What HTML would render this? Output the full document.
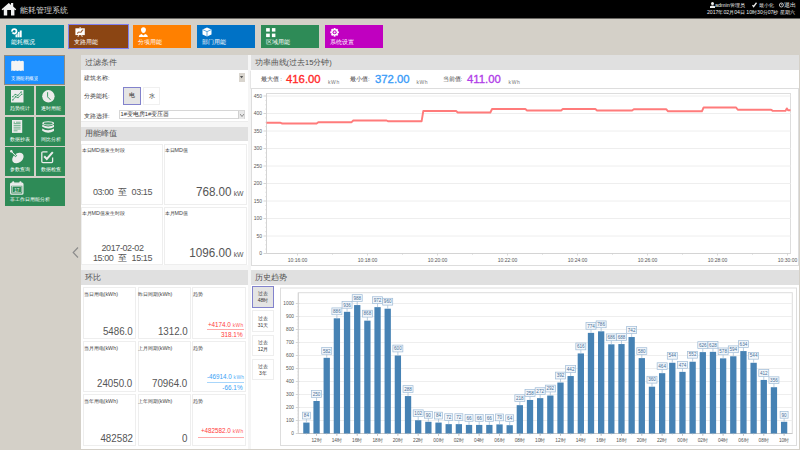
<!DOCTYPE html>
<html><head><meta charset="utf-8">
<style>
*{margin:0;padding:0;box-sizing:border-box}
html,body{width:800px;height:450px;overflow:hidden;background:#d4d0c8;font-family:"Liberation Sans", sans-serif;}
.a{position:absolute}
.hdr{left:0;top:0;width:800px;height:18px;background:#000;box-shadow:0 1px 0 #6a6864}
.tile{position:absolute;top:25px;width:58px;height:23px;color:#fff}
.tile .t{position:absolute;left:5px;top:13.5px;font-size:6px;line-height:7px;white-space:nowrap}
.tile svg{position:absolute;left:5px;top:3px}
.panel{position:absolute;background:#fff}
.ph{position:absolute;background:#e0e0e0;color:#505050;font-size:7.7px;line-height:15px;padding-left:4px;white-space:nowrap}
.card{position:absolute;background:#fff;border:1px solid #eee}
.lbl{position:absolute;font-size:5.5px;line-height:6.5px;color:#444;white-space:nowrap}
.num{position:absolute;color:#555;white-space:nowrap;text-align:right}
.side{position:absolute;background:#2e8b57;color:#fff}
.side .t{position:absolute;left:5.3px;font-size:4.8px;line-height:6px;top:19.8px;white-space:nowrap}
</style></head><body>
<div class="a hdr"></div>
<!-- house icon -->
<svg class="a" style="left:1px;top:2px" width="16" height="15" viewBox="0 0 16 15">
<path d="M7.8 1 L0.6 7.3 L1.4 8.2 L2.8 7.4 L2.8 13.6 L6.2 13.6 L6.2 7.9 L10 7.9 L10 13.6 L13.4 13.6 L13.4 7.4 L14.5 8.2 L15.2 7.3 L12.2 4.6 L12.2 1 L10 1 L10 2.9 Z" fill="#f0f0f0"/>
</svg>
<div class="a" style="left:20px;top:4.6px;font-size:8.3px;line-height:11px;color:#ddd;white-space:nowrap">能耗管理系统</div>
<svg class="a" style="left:710px;top:2px" width="5" height="6" viewBox="0 0 5 6"><circle cx="2.5" cy="1.6" r="1.5" fill="#eee"/><path d="M0 6 L0 4.2 Q2.5 2.6 5 4.2 L5 6 Z" fill="#eee"/></svg>
<div class="a" style="left:715px;top:1.5px;font-size:5.4px;line-height:7px;color:#eee;white-space:nowrap">admin管理员</div>
<svg class="a" style="left:752px;top:2px" width="5" height="6" viewBox="0 0 5 6"><path d="M0 3.5 L1.6 5.8 L5 1.2 L4 0.2 L1.6 3.6 L1 2.8 Z" fill="#eee"/></svg>
<div class="a" style="left:758.5px;top:1.5px;font-size:5.4px;line-height:7px;color:#eee;white-space:nowrap">最小化</div>
<svg class="a" style="left:778.5px;top:2px" width="5" height="6" viewBox="0 0 5 6"><circle cx="2.4" cy="3" r="2" fill="none" stroke="#eee" stroke-width="0.8"/><path d="M2.4 1.8 V3 H3.4" stroke="#eee" stroke-width="0.6" fill="none"/></svg>
<div class="a" style="left:783.5px;top:1.5px;font-size:5.8px;line-height:7px;color:#eee;white-space:nowrap">退出</div>
<div class="a" style="left:707px;top:9px;font-size:5.15px;line-height:7px;color:#eee;white-space:nowrap">2017年02月04日 10时30分07秒 星期六</div>

<!-- top tiles -->
<div class="tile" style="left:6px;background:#00879b"><svg style="left:4.5px;top:2.5px" width="12" height="10" viewBox="0 0 12 10"><rect x="4.5" y="5.4" width="2.1" height="3.9" fill="#f4fafa"/><rect x="6.8" y="3.9" width="1.8" height="5.4" fill="#f4fafa"/><rect x="8.8" y="2.5" width="1.9" height="6.8" fill="#fff"/><circle cx="3.3" cy="3.3" r="2.2" fill="none" stroke="#00879b" stroke-width="3"/><circle cx="3.3" cy="3.3" r="2.2" fill="none" stroke="#fff" stroke-width="1.75" stroke-dasharray="5 0.9 7.0 0.9"/></svg><div class="t">能耗概况</div></div>
<div class="tile" style="left:68px;top:23.5px;width:61px;height:25.5px;border:1.5px solid #8080f0;background:#8b4513"><svg style="left:5.8px;top:2.5px" width="11" height="11" viewBox="0 0 11 11"><rect x="0.4" y="1.3" width="9.4" height="6.8" fill="#fff"/><path d="M2.4 6.6 Q3 4.6 4.8 5.2 Q6.4 5.6 6.8 4 Q7.3 2.9 8.3 3.1" stroke="#a0643a" stroke-width="1.1" fill="none"/><path d="M5.1 0 L5.1 1.5" stroke="#fff" stroke-width="1"/><path d="M3.6 8 L2.9 10 M6.6 8 L7.3 10" stroke="#f4e8e0" stroke-width="0.9"/></svg><div class="t" style="top:14.6px;left:5.3px">支路用能</div></div>
<div class="tile" style="left:133px;background:#ff8000"><svg style="left:5px;top:2px" width="11" height="11" viewBox="0 0 11 11"><path d="M5.45 0.3 Q8 0.3 7.9 2.8 Q7.7 5.9 5.45 5.9 Q3.2 5.9 3 2.8 Q2.9 0.3 5.45 0.3 Z" fill="#fff"/><path d="M0.7 10 Q0.9 7.6 3.6 7 L5.3 8.6 L7.2 7 Q9.8 7.6 9.9 10 Z" fill="#fff"/></svg><div class="t">分项用能</div></div>
<div class="tile" style="left:197px;background:#0072c6"><svg style="left:5px;top:2.2px" width="10" height="10" viewBox="0 0 10 10"><path d="M5 0.5 L9.5 2.5 L9.5 7.5 L5 9.5 L0.5 7.5 L0.5 2.5 Z" fill="#fff"/><path d="M0.8 2.7 L5 4.6 L9.2 2.7 M5 4.6 L5 9.3" stroke="#0072c6" stroke-width="0.6" fill="none"/></svg><div class="t">部门用能</div></div>
<div class="tile" style="left:261px;background:#2e8b57"><svg style="left:5px;top:2.5px" width="10" height="10" viewBox="0 0 10 10"><rect x="0.1" y="0.1" width="3.7" height="3.5" fill="#fff"/><rect x="5.9" y="0.1" width="3.5" height="3.5" fill="#fff"/><rect x="0.1" y="5.6" width="3.7" height="3.5" fill="#fff"/><rect x="5.9" y="5.6" width="3.5" height="3.5" fill="#fff"/></svg><div class="t">区域用能</div></div>
<div class="tile" style="left:325px;background:#c000c0"><svg style="left:5px;top:2.7px" width="10" height="10" viewBox="0 0 10 10"><g fill="#fff"><circle cx="4.6" cy="4.3" r="3.3"/><rect x="3.7" y="0" width="1.8" height="8.6"/><rect x="0.3" y="3.4" width="8.6" height="1.8"/><rect x="3.7" y="0" width="1.8" height="8.6" transform="rotate(45 4.6 4.3)"/><rect x="3.7" y="0" width="1.8" height="8.6" transform="rotate(-45 4.6 4.3)"/></g><circle cx="4.6" cy="4.3" r="2" fill="#c000c0"/><circle cx="4.6" cy="4.3" r="1.1" fill="#f6e0f6"/></svg><div class="t">系统设置</div></div>

<!-- sidebar -->
<div class="a" style="left:4px;top:55px;width:61px;height:29.5px;background:#1e90ff;border:1px solid #8d8b82"><svg class="a" style="left:6px;top:4px" width="13" height="11.5" viewBox="0 0 13 11.5"><path d="M0.2 1.6 Q1.5 0.2 3.2 1.2 Q4.8 0 6.5 1.2 Q8.2 0 9.8 1.2 Q11.5 0.2 12.8 1.6 L12.8 11 Q11.5 9.8 9.8 11 Q8.2 9.8 6.5 11 Q4.8 9.8 3.2 11 Q1.5 9.8 0.2 11 Z" fill="#f4f4f4"/></svg><div class="a" style="left:5.8px;top:18.8px;font-size:5px;line-height:6px;color:#fff;white-space:nowrap;transform:scaleX(0.9);transform-origin:0 50%">支路能耗概览</div></div>
<div class="side" style="left:5px;top:86px;width:28.5px;height:28.5px"><svg class="a" style="left:6px;top:4px" width="12.5" height="12.5" viewBox="0 0 12.5 12.5"><rect x="0" y="0" width="12.5" height="12.5" fill="#ececec"/><path d="M1.8 10 L4.6 6.8 L7 7.6 L10.8 4.2 M1.8 6.8 L4.2 4.4 L6.8 5.4 L10.2 2" stroke="#3d9a66" stroke-width="0.8" fill="none"/><g fill="#3d9a66"><circle cx="1.8" cy="10" r="0.7"/><circle cx="4.6" cy="6.8" r="0.7"/><circle cx="7" cy="7.6" r="0.7"/><circle cx="10.8" cy="4.2" r="0.7"/><circle cx="1.8" cy="6.8" r="0.7"/><circle cx="4.2" cy="4.4" r="0.7"/><circle cx="6.8" cy="5.4" r="0.7"/><circle cx="10.2" cy="2" r="0.7"/></g></svg><div class="t">趋势统计</div></div>
<div class="side" style="left:36px;top:86px;width:28.5px;height:28.5px"><svg class="a" style="left:5.6px;top:4px" width="13" height="13" viewBox="0 0 13 13"><circle cx="6.4" cy="6.3" r="6.2" fill="#ececec"/><path d="M5.6 2.2 L5.6 6.8 Q6.4 8.4 8.6 9.6" stroke="#3d9a66" stroke-width="1" fill="none"/></svg><div class="t">逐时用能</div></div>
<div class="side" style="left:5px;top:117px;width:28.5px;height:28.5px"><svg class="a" style="left:7.3px;top:3.2px" width="10.5" height="13" viewBox="0 0 10.5 13"><rect x="0" y="0" width="10.2" height="12.9" fill="#ececec"/><path d="M1.6 2.2 H3 M4 2.2 H8.6 M1.6 3.6 H8.6 M1.6 5.4 H8.6 M1.6 7.2 H8.6 M1.6 9.0 H8.6 M1.6 10.8 H5.5" stroke="#3d9a66" stroke-width="0.7"/></svg><div class="t">数据抄表</div></div>
<div class="side" style="left:36px;top:117px;width:28.5px;height:28.5px"><svg class="a" style="left:5.6px;top:3.6px" width="12.5" height="13" viewBox="0 0 12.5 13"><ellipse cx="6.2" cy="2.3" rx="6" ry="2.1" fill="#ececec"/><ellipse cx="6.2" cy="2.4" rx="4.4" ry="1.1" fill="#3d9a66"/><path d="M0.2 3.6 Q6.2 7.4 12.2 3.6 L12.2 5.8 Q6.2 9.4 0.2 5.8 Z" fill="#ececec"/><path d="M0.2 7.4 Q6.2 11.2 12.2 7.4 L12.2 9.8 Q6.2 13.6 0.2 9.8 Z" fill="#ececec"/></svg><div class="t">同比分析</div></div>
<div class="side" style="left:5px;top:147px;width:28.5px;height:28.5px"><svg class="a" style="left:5.3px;top:3.3px" width="14" height="14" viewBox="0 0 14 14"><ellipse cx="7.9" cy="8" rx="6.3" ry="4.6" fill="#ececec" transform="rotate(-40 7.9 8)"/><path d="M1.2 1.2 L6.4 6.6" stroke="#3d9a66" stroke-width="2.2"/><path d="M1.2 1.2 L6.4 6.6" stroke="#ececec" stroke-width="1.0"/><circle cx="1.3" cy="1.3" r="1.2" fill="#ececec"/></svg><div class="t">参数查询</div></div>
<div class="side" style="left:36px;top:147px;width:28.5px;height:28.5px"><svg class="a" style="left:5.3px;top:4px" width="13" height="13" viewBox="0 0 13 13"><path d="M6.5 0.8 H2 Q0.8 0.8 0.8 2 V10.6 Q0.8 11.7 2 11.7 H10.4 Q11.6 11.7 11.6 10.6 V6.5" stroke="#ececec" stroke-width="1.3" fill="none"/><path d="M3.2 5.2 L5.8 8 L11.8 1.2" stroke="#ececec" stroke-width="2" fill="none"/></svg><div class="t">数据检查</div></div>
<div class="side" style="left:5px;top:178px;width:59.5px;height:28px"><svg class="a" style="left:5.4px;top:2.6px" width="14" height="14" viewBox="0 0 14 14"><rect x="0.7" y="2.2" width="12.2" height="11" rx="1" fill="none" stroke="#ececec" stroke-width="1.3"/><rect x="0.7" y="2.2" width="12.2" height="2.6" fill="#ececec"/><circle cx="3.2" cy="1.4" r="1.1" fill="#ececec"/><circle cx="10.4" cy="1.4" r="1.1" fill="#ececec"/><rect x="2.4" y="5.6" width="8.8" height="5.8" fill="none" stroke="#ececec" stroke-width="0.5"/><text x="6.8" y="10.6" font-size="4.6" fill="#ececec" text-anchor="middle" font-family="Liberation Sans">17</text></svg><div class="t" style="top:19px">非工作日用能分析</div></div>
<svg class="a" style="left:72px;top:247px" width="7" height="11" viewBox="0 0 7 11"><path d="M6 0.5 L1.2 5.5 L6 10.5" stroke="#8c8c8c" stroke-width="1.2" fill="none"/></svg>

<!-- left column -->
<div class="panel" style="left:81px;top:55px;width:718px;height:394px"></div>
<div class="a" style="left:248px;top:55px;width:2.5px;height:394px;background:#f5f5f5"></div>
<div class="ph" style="left:81px;top:55px;width:167px;height:15px">过滤条件</div>
<div class="lbl" style="left:84px;top:75px">建筑名称:</div>
<div class="a" style="left:238.8px;top:73.2px;width:6.3px;height:8.4px;background:#d9d5ce"><svg class="a" style="left:1.6px;top:3.2px" width="3.2" height="2.2" viewBox="0 0 3.2 2.2"><path d="M0 0.2 Q1.6 -0.3 3.2 0.2 L1.6 2.2 Z" fill="#555"/></svg></div>
<div class="lbl" style="left:84px;top:93px">分类能耗:</div>
<div class="a" style="left:122.5px;top:86.5px;width:18px;height:18px;background:#e4e4e4;border:1.5px solid #8282cc;font-size:5.5px;line-height:14px;text-align:center;color:#333">电</div>
<div class="a" style="left:143px;top:86.5px;width:17px;height:18px;background:#fff;border:1px solid #f0f0f0;font-size:5.5px;line-height:16px;text-align:center;color:#333">水</div>
<div class="lbl" style="left:84px;top:112.5px">支路选择:</div>
<div class="a" style="left:119px;top:109.6px;width:126px;height:9.5px;background:#fff;border:1px solid #d6d6d6;font-size:5.7px;line-height:7.5px;padding-left:0.5px;color:#333;white-space:nowrap">1#变电房1#变压器</div>
<div class="a" style="left:237.5px;top:111px;width:6.5px;height:7.5px;background:#e8e8e8;border-left:1px solid #d0d0d0"><svg class="a" style="left:1.5px;top:2.5px" width="4" height="3" viewBox="0 0 4 3"><path d="M0 0 L2 2.5 L4 0" stroke="#666" stroke-width="0.7" fill="none"/></svg></div>
<div class="a" style="left:81px;top:121.3px;width:167px;height:5.3px;background:#f6f6f6;border-top:1px solid #ececec"></div>

<div class="ph" style="left:81px;top:126.6px;width:167px;height:14.8px;line-height:14.8px">用能峰值</div>
<div class="card" style="left:81px;top:143.5px;width:82px;height:61px"><div class="lbl" style="left:-0.4px;top:2.2px;font-size:5.4px">本日MD值发生时段</div><div class="num" style="left:0;width:81px;text-align:center;top:42.6px;font-size:9px;line-height:10.5px;letter-spacing:-0.4px">03:00<span style="margin:0 4.5px 0 5px">至</span>03:15</div></div>
<div class="card" style="left:164px;top:143.5px;width:82.5px;height:61px"><div class="lbl" style="left:-0.4px;top:2.2px;font-size:5.4px">本日MD值</div><div class="num" style="right:2px;top:40.3px;font-size:12.3px;line-height:14px"><span style="display:inline-block;transform:scaleX(0.95);transform-origin:100% 50%">768.00</span><span style="font-size:6.8px"> kW</span></div></div>
<div class="card" style="left:81px;top:206.5px;width:82px;height:58px"><div class="lbl" style="left:-0.4px;top:2.2px;font-size:5.4px">本月MD值发生时段</div><div class="num" style="left:0;width:81px;text-align:center;top:35px;font-size:9px;line-height:10.5px;letter-spacing:-0.4px">2017-02-02<br>15:00<span style="margin:0 4.5px 0 5px">至</span>15:15</div></div>
<div class="card" style="left:164px;top:206.5px;width:82.5px;height:58px"><div class="lbl" style="left:-0.4px;top:2.2px;font-size:5.4px">本月MD值</div><div class="num" style="right:2px;top:38.6px;font-size:12.3px;line-height:14px"><span style="display:inline-block;transform:scaleX(0.95);transform-origin:100% 50%">1096.00</span><span style="font-size:6.8px"> kW</span></div></div>
<div class="a" style="left:81px;top:265.2px;width:167px;height:4.5px;background:#f7f7f7"></div>
<div class="ph" style="left:81px;top:269.7px;width:167px;height:15.3px;line-height:15.3px">环比</div>
<div class="card" style="left:83.4px;top:287.2px;width:52.6px;height:52px"><div class="lbl" style="left:-0.8px;top:2.7px;font-size:5.4px">当日用电(kWh)</div><div class="num" style="right:2.3px;top:35.40px;font-size:11.7px;line-height:14px;transform:scaleX(0.835);transform-origin:100% 50%">5486.0</div></div>
<div class="card" style="left:137.8px;top:287.2px;width:52.8px;height:52px"><div class="lbl" style="left:-0.8px;top:2.7px;font-size:5.4px">昨日同期(kWh)</div><div class="num" style="right:2.3px;top:35.40px;font-size:11.7px;line-height:14px;transform:scaleX(0.835);transform-origin:100% 50%">1312.0</div></div>
<div class="card" style="left:192.4px;top:287.2px;width:53.2px;height:52px"><div class="lbl" style="left:-0.8px;top:2.7px;font-size:5.4px">趋势</div><div class="num" style="right:1px;top:32.60px;width:36.7px;font-size:6.3px;line-height:7.5px;color:#ff3b3b;border-bottom:1px solid #ff3b3b70">+4174.0<span style="font-size:4.8px;letter-spacing:0.45px;opacity:0.85"> kWh</span></div><div class="num" style="right:2px;top:43.10px;font-size:6.4px;line-height:8px;color:#ff3b3b">318.1%</div></div>
<div class="card" style="left:83.4px;top:341.4px;width:52.6px;height:50.5px"><div class="lbl" style="left:-0.8px;top:2.7px;font-size:5.4px">当月用电(kWh)</div><div class="num" style="right:2.3px;top:33.90px;font-size:11.7px;line-height:14px;transform:scaleX(0.835);transform-origin:100% 50%">24050.0</div></div>
<div class="card" style="left:137.8px;top:341.4px;width:52.8px;height:50.5px"><div class="lbl" style="left:-0.8px;top:2.7px;font-size:5.4px">上月同期(kWh)</div><div class="num" style="right:2.3px;top:33.90px;font-size:11.7px;line-height:14px;transform:scaleX(0.835);transform-origin:100% 50%">70964.0</div></div>
<div class="card" style="left:192.4px;top:341.4px;width:53.2px;height:50.5px"><div class="lbl" style="left:-0.8px;top:2.7px;font-size:5.4px">趋势</div><div class="num" style="right:1px;top:31.10px;width:36.7px;font-size:6.3px;line-height:7.5px;color:#38a2f5;border-bottom:1px solid #38a2f570">-46914.0<span style="font-size:4.8px;letter-spacing:0.45px;opacity:0.85"> kWh</span></div><div class="num" style="right:2px;top:41.60px;font-size:6.4px;line-height:8px;color:#38a2f5">-66.1%</div></div>
<div class="card" style="left:83.4px;top:394.3px;width:52.6px;height:52px"><div class="lbl" style="left:-0.8px;top:2.7px;font-size:5.4px">当年用电(kWh)</div><div class="num" style="right:2.3px;top:35.40px;font-size:11.7px;line-height:14px;transform:scaleX(0.835);transform-origin:100% 50%">482582</div></div>
<div class="card" style="left:137.8px;top:394.3px;width:52.8px;height:52px"><div class="lbl" style="left:-0.8px;top:2.7px;font-size:5.4px">上年同期(kWh)</div><div class="num" style="right:2.3px;top:35.40px;font-size:11.7px;line-height:14px;transform:scaleX(0.835);transform-origin:100% 50%">0</div></div>
<div class="card" style="left:192.4px;top:394.3px;width:53.2px;height:52px"><div class="lbl" style="left:-0.8px;top:2.7px;font-size:5.4px">趋势</div><div class="num" style="right:1px;top:31.90px;width:46px;font-size:6.3px;line-height:7.5px;padding-bottom:1.8px;color:#ff3b3b;border-bottom:1px solid #ff3b3b70">+482582.0<span style="font-size:4.8px;letter-spacing:0.45px;opacity:0.85"> kWh</span></div></div>

<!-- right column -->

<div class="ph" style="left:250.5px;top:55px;width:548.5px;height:15px;font-size:7.5px">功率曲线(过去15分钟)</div>
<div class="a" style="left:250px;top:70.5px;width:549px;height:18px;background:#fff;border-left:1px solid #e6e6e6"></div>
<div class="lbl" style="left:260.5px;top:76.3px;font-size:6px;line-height:7px">最大值 :</div>
<div class="num" style="left:286px;top:72.6px;font-size:11.8px;line-height:13px;color:#ff2a2a;transform:scaleX(0.96);transform-origin:0 50%;-webkit-text-stroke:0.35px">416.00</div>
<div class="lbl" style="left:328px;top:78.6px;font-size:5px;line-height:6px;letter-spacing:0.6px;color:#777">kWh</div>
<div class="lbl" style="left:350px;top:76.3px;font-size:6px;line-height:7px">最小值:</div>
<div class="num" style="left:375px;top:72.6px;font-size:11.8px;line-height:13px;color:#3a9cf8;transform:scaleX(0.96);transform-origin:0 50%;-webkit-text-stroke:0.35px">372.00</div>
<div class="lbl" style="left:416.4px;top:78.6px;font-size:5px;line-height:6px;letter-spacing:0.6px;color:#777">kWh</div>
<div class="lbl" style="left:442.5px;top:76.3px;font-size:6px;line-height:7px">当前值:</div>
<div class="num" style="left:467px;top:72.6px;font-size:11.8px;line-height:13px;color:#b13de8;transform:scaleX(0.96);transform-origin:0 50%;-webkit-text-stroke:0.35px">411.00</div>
<div class="lbl" style="left:508.6px;top:78.6px;font-size:5px;line-height:6px;letter-spacing:0.6px;color:#777">kWh</div>

<div class="ph" style="left:250.5px;top:270px;width:548.5px;height:15px;font-size:7.5px">历史趋势</div>
<div class="a" style="left:252px;top:286px;width:22px;height:21.5px;background:#e4e4e4;border:1.5px solid #8282cc;font-size:5px;line-height:7px;text-align:center;color:#333;padding-top:2.8px">过去<br>48时</div>
<div class="a" style="left:252px;top:310px;width:22px;height:21.5px;background:#fff;border:1px solid #eee;font-size:5px;line-height:7px;text-align:center;color:#333;padding-top:3.5px">过去<br>31天</div>
<div class="a" style="left:252px;top:334.5px;width:22px;height:21.5px;background:#fff;border:1px solid #eee;font-size:5px;line-height:7px;text-align:center;color:#333;padding-top:3.5px">过去<br>12月</div>
<div class="a" style="left:252px;top:358.5px;width:22px;height:21.5px;background:#fff;border:1px solid #eee;font-size:5px;line-height:7px;text-align:center;color:#333;padding-top:3.5px">过去<br>3年</div>

<svg class="a" style="left:0;top:0" width="800" height="450" viewBox="0 0 800 450" font-family="Liberation Sans, sans-serif">
<rect x="251.5" y="88.5" width="547" height="177" fill="#fff" stroke="#ddd" stroke-width="1"/>
<rect x="266.5" y="93.5" width="524.0" height="160.0" fill="#fff" stroke="#ddd" stroke-width="1"/>
<line x1="266.5" y1="236.00" x2="790.5" y2="236.00" stroke="#eee" stroke-width="1"/>
<line x1="266.5" y1="218.50" x2="790.5" y2="218.50" stroke="#eee" stroke-width="1"/>
<line x1="266.5" y1="201.00" x2="790.5" y2="201.00" stroke="#eee" stroke-width="1"/>
<line x1="266.5" y1="183.50" x2="790.5" y2="183.50" stroke="#eee" stroke-width="1"/>
<line x1="266.5" y1="166.00" x2="790.5" y2="166.00" stroke="#eee" stroke-width="1"/>
<line x1="266.5" y1="148.50" x2="790.5" y2="148.50" stroke="#eee" stroke-width="1"/>
<line x1="266.5" y1="131.00" x2="790.5" y2="131.00" stroke="#eee" stroke-width="1"/>
<line x1="266.5" y1="113.50" x2="790.5" y2="113.50" stroke="#eee" stroke-width="1"/>
<line x1="266.5" y1="96.00" x2="790.5" y2="96.00" stroke="#eee" stroke-width="1"/>
<text x="262" y="255.30" text-anchor="end" font-size="5" fill="#555">0</text>
<line x1="263.5" y1="253.50" x2="266.5" y2="253.50" stroke="#c4c4c4" stroke-width="0.7"/>
<line x1="265.0" y1="249.12" x2="266.5" y2="249.12" stroke="#d0d0d0" stroke-width="0.5"/>
<line x1="265.0" y1="244.75" x2="266.5" y2="244.75" stroke="#d0d0d0" stroke-width="0.5"/>
<line x1="265.0" y1="240.38" x2="266.5" y2="240.38" stroke="#d0d0d0" stroke-width="0.5"/>
<text x="262" y="237.80" text-anchor="end" font-size="5" fill="#555">50</text>
<line x1="263.5" y1="236.00" x2="266.5" y2="236.00" stroke="#c4c4c4" stroke-width="0.7"/>
<line x1="265.0" y1="231.62" x2="266.5" y2="231.62" stroke="#d0d0d0" stroke-width="0.5"/>
<line x1="265.0" y1="227.25" x2="266.5" y2="227.25" stroke="#d0d0d0" stroke-width="0.5"/>
<line x1="265.0" y1="222.88" x2="266.5" y2="222.88" stroke="#d0d0d0" stroke-width="0.5"/>
<text x="262" y="220.30" text-anchor="end" font-size="5" fill="#555">100</text>
<line x1="263.5" y1="218.50" x2="266.5" y2="218.50" stroke="#c4c4c4" stroke-width="0.7"/>
<line x1="265.0" y1="214.12" x2="266.5" y2="214.12" stroke="#d0d0d0" stroke-width="0.5"/>
<line x1="265.0" y1="209.75" x2="266.5" y2="209.75" stroke="#d0d0d0" stroke-width="0.5"/>
<line x1="265.0" y1="205.38" x2="266.5" y2="205.38" stroke="#d0d0d0" stroke-width="0.5"/>
<text x="262" y="202.80" text-anchor="end" font-size="5" fill="#555">150</text>
<line x1="263.5" y1="201.00" x2="266.5" y2="201.00" stroke="#c4c4c4" stroke-width="0.7"/>
<line x1="265.0" y1="196.62" x2="266.5" y2="196.62" stroke="#d0d0d0" stroke-width="0.5"/>
<line x1="265.0" y1="192.25" x2="266.5" y2="192.25" stroke="#d0d0d0" stroke-width="0.5"/>
<line x1="265.0" y1="187.88" x2="266.5" y2="187.88" stroke="#d0d0d0" stroke-width="0.5"/>
<text x="262" y="185.30" text-anchor="end" font-size="5" fill="#555">200</text>
<line x1="263.5" y1="183.50" x2="266.5" y2="183.50" stroke="#c4c4c4" stroke-width="0.7"/>
<line x1="265.0" y1="179.12" x2="266.5" y2="179.12" stroke="#d0d0d0" stroke-width="0.5"/>
<line x1="265.0" y1="174.75" x2="266.5" y2="174.75" stroke="#d0d0d0" stroke-width="0.5"/>
<line x1="265.0" y1="170.38" x2="266.5" y2="170.38" stroke="#d0d0d0" stroke-width="0.5"/>
<text x="262" y="167.80" text-anchor="end" font-size="5" fill="#555">250</text>
<line x1="263.5" y1="166.00" x2="266.5" y2="166.00" stroke="#c4c4c4" stroke-width="0.7"/>
<line x1="265.0" y1="161.62" x2="266.5" y2="161.62" stroke="#d0d0d0" stroke-width="0.5"/>
<line x1="265.0" y1="157.25" x2="266.5" y2="157.25" stroke="#d0d0d0" stroke-width="0.5"/>
<line x1="265.0" y1="152.88" x2="266.5" y2="152.88" stroke="#d0d0d0" stroke-width="0.5"/>
<text x="262" y="150.30" text-anchor="end" font-size="5" fill="#555">300</text>
<line x1="263.5" y1="148.50" x2="266.5" y2="148.50" stroke="#c4c4c4" stroke-width="0.7"/>
<line x1="265.0" y1="144.12" x2="266.5" y2="144.12" stroke="#d0d0d0" stroke-width="0.5"/>
<line x1="265.0" y1="139.75" x2="266.5" y2="139.75" stroke="#d0d0d0" stroke-width="0.5"/>
<line x1="265.0" y1="135.38" x2="266.5" y2="135.38" stroke="#d0d0d0" stroke-width="0.5"/>
<text x="262" y="132.80" text-anchor="end" font-size="5" fill="#555">350</text>
<line x1="263.5" y1="131.00" x2="266.5" y2="131.00" stroke="#c4c4c4" stroke-width="0.7"/>
<line x1="265.0" y1="126.62" x2="266.5" y2="126.62" stroke="#d0d0d0" stroke-width="0.5"/>
<line x1="265.0" y1="122.25" x2="266.5" y2="122.25" stroke="#d0d0d0" stroke-width="0.5"/>
<line x1="265.0" y1="117.88" x2="266.5" y2="117.88" stroke="#d0d0d0" stroke-width="0.5"/>
<text x="262" y="115.30" text-anchor="end" font-size="5" fill="#555">400</text>
<line x1="263.5" y1="113.50" x2="266.5" y2="113.50" stroke="#c4c4c4" stroke-width="0.7"/>
<line x1="265.0" y1="109.12" x2="266.5" y2="109.12" stroke="#d0d0d0" stroke-width="0.5"/>
<line x1="265.0" y1="104.75" x2="266.5" y2="104.75" stroke="#d0d0d0" stroke-width="0.5"/>
<line x1="265.0" y1="100.38" x2="266.5" y2="100.38" stroke="#d0d0d0" stroke-width="0.5"/>
<text x="262" y="97.80" text-anchor="end" font-size="5" fill="#555">450</text>
<line x1="263.5" y1="96.00" x2="266.5" y2="96.00" stroke="#c4c4c4" stroke-width="0.7"/>
<line x1="266.5" y1="93.5" x2="266.5" y2="253.5" stroke="#d4d4d4" stroke-width="1"/>
<line x1="266.5" y1="253.5" x2="790.5" y2="253.5" stroke="#d4d4d4" stroke-width="1"/>
<line x1="297.5" y1="253.5" x2="297.5" y2="255.5" stroke="#c8c8c8" stroke-width="0.7"/>
<line x1="332.5" y1="253.5" x2="332.5" y2="255.0" stroke="#ccc" stroke-width="0.5"/>
<text x="297.5" y="262.3" text-anchor="middle" font-size="5" fill="#555">10:16:00</text>
<line x1="367.5" y1="253.5" x2="367.5" y2="255.5" stroke="#c8c8c8" stroke-width="0.7"/>
<line x1="402.5" y1="253.5" x2="402.5" y2="255.0" stroke="#ccc" stroke-width="0.5"/>
<text x="367.5" y="262.3" text-anchor="middle" font-size="5" fill="#555">10:18:00</text>
<line x1="437.5" y1="253.5" x2="437.5" y2="255.5" stroke="#c8c8c8" stroke-width="0.7"/>
<line x1="472.5" y1="253.5" x2="472.5" y2="255.0" stroke="#ccc" stroke-width="0.5"/>
<text x="437.5" y="262.3" text-anchor="middle" font-size="5" fill="#555">10:20:00</text>
<line x1="507.5" y1="253.5" x2="507.5" y2="255.5" stroke="#c8c8c8" stroke-width="0.7"/>
<line x1="542.5" y1="253.5" x2="542.5" y2="255.0" stroke="#ccc" stroke-width="0.5"/>
<text x="507.5" y="262.3" text-anchor="middle" font-size="5" fill="#555">10:22:00</text>
<line x1="577.5" y1="253.5" x2="577.5" y2="255.5" stroke="#c8c8c8" stroke-width="0.7"/>
<line x1="612.5" y1="253.5" x2="612.5" y2="255.0" stroke="#ccc" stroke-width="0.5"/>
<text x="577.5" y="262.3" text-anchor="middle" font-size="5" fill="#555">10:24:00</text>
<line x1="647.5" y1="253.5" x2="647.5" y2="255.5" stroke="#c8c8c8" stroke-width="0.7"/>
<line x1="682.5" y1="253.5" x2="682.5" y2="255.0" stroke="#ccc" stroke-width="0.5"/>
<text x="647.5" y="262.3" text-anchor="middle" font-size="5" fill="#555">10:26:00</text>
<line x1="717.5" y1="253.5" x2="717.5" y2="255.5" stroke="#c8c8c8" stroke-width="0.7"/>
<line x1="752.5" y1="253.5" x2="752.5" y2="255.0" stroke="#ccc" stroke-width="0.5"/>
<text x="717.5" y="262.3" text-anchor="middle" font-size="5" fill="#555">10:28:00</text>
<line x1="787.5" y1="253.5" x2="787.5" y2="255.5" stroke="#c8c8c8" stroke-width="0.7"/>
<line x1="822.5" y1="253.5" x2="822.5" y2="255.0" stroke="#ccc" stroke-width="0.5"/>
<text x="787.5" y="262.3" text-anchor="middle" font-size="5" fill="#555">10:30:00</text>
<path d="M266.50,122.80 L280.60,122.80 L282.30,123.50 L316.60,123.50 L318.30,122.20 L351.60,122.20 L353.30,120.50 L386.60,120.50 L388.30,121.30 L421.60,121.30 L423.30,111.00 L456.10,111.00 L457.80,112.50 L490.35,112.50 L492.05,109.00 L525.35,109.00 L527.05,110.50 L561.10,110.50 L562.80,109.00 L595.35,109.00 L597.05,110.50 L632.10,110.50 L633.80,109.30 L666.35,109.30 L668.05,111.30 L701.90,111.30 L703.60,107.50 L736.10,107.50 L737.80,109.75 L771.10,109.75 L772.80,110.90 L785.50,110.90 L786.80,108.40 L788.00,110.20 L790.50,110.20" fill="none" stroke="#ff7b7b" stroke-width="1.9" stroke-linejoin="round"/>
<rect x="280.5" y="288" width="516" height="157.5" fill="#fff" stroke="#ddd" stroke-width="1"/>
<rect x="298.3" y="292.7" width="494.00" height="140.80" fill="#fff" stroke="#ddd" stroke-width="1"/>
<line x1="298.3" y1="420.50" x2="792.3" y2="420.50" stroke="#eee" stroke-width="1"/>
<line x1="298.3" y1="407.50" x2="792.3" y2="407.50" stroke="#eee" stroke-width="1"/>
<line x1="298.3" y1="394.50" x2="792.3" y2="394.50" stroke="#eee" stroke-width="1"/>
<line x1="298.3" y1="381.50" x2="792.3" y2="381.50" stroke="#eee" stroke-width="1"/>
<line x1="298.3" y1="368.50" x2="792.3" y2="368.50" stroke="#eee" stroke-width="1"/>
<line x1="298.3" y1="355.50" x2="792.3" y2="355.50" stroke="#eee" stroke-width="1"/>
<line x1="298.3" y1="342.50" x2="792.3" y2="342.50" stroke="#eee" stroke-width="1"/>
<line x1="298.3" y1="329.50" x2="792.3" y2="329.50" stroke="#eee" stroke-width="1"/>
<line x1="298.3" y1="316.50" x2="792.3" y2="316.50" stroke="#eee" stroke-width="1"/>
<line x1="298.3" y1="303.50" x2="792.3" y2="303.50" stroke="#eee" stroke-width="1"/>
<text x="294" y="435.20" text-anchor="end" font-size="4.8" fill="#555">0</text>
<line x1="295.8" y1="433.50" x2="299.3" y2="433.50" stroke="#c4c4c4" stroke-width="0.7"/>
<line x1="297.1" y1="430.25" x2="298.3" y2="430.25" stroke="#ccc" stroke-width="0.4"/>
<line x1="297.1" y1="427.00" x2="298.3" y2="427.00" stroke="#ccc" stroke-width="0.4"/>
<line x1="297.1" y1="423.75" x2="298.3" y2="423.75" stroke="#ccc" stroke-width="0.4"/>
<text x="294" y="422.20" text-anchor="end" font-size="4.8" fill="#555">100</text>
<line x1="295.8" y1="420.50" x2="299.3" y2="420.50" stroke="#c4c4c4" stroke-width="0.7"/>
<line x1="297.1" y1="417.25" x2="298.3" y2="417.25" stroke="#ccc" stroke-width="0.4"/>
<line x1="297.1" y1="414.00" x2="298.3" y2="414.00" stroke="#ccc" stroke-width="0.4"/>
<line x1="297.1" y1="410.75" x2="298.3" y2="410.75" stroke="#ccc" stroke-width="0.4"/>
<text x="294" y="409.20" text-anchor="end" font-size="4.8" fill="#555">200</text>
<line x1="295.8" y1="407.50" x2="299.3" y2="407.50" stroke="#c4c4c4" stroke-width="0.7"/>
<line x1="297.1" y1="404.25" x2="298.3" y2="404.25" stroke="#ccc" stroke-width="0.4"/>
<line x1="297.1" y1="401.00" x2="298.3" y2="401.00" stroke="#ccc" stroke-width="0.4"/>
<line x1="297.1" y1="397.75" x2="298.3" y2="397.75" stroke="#ccc" stroke-width="0.4"/>
<text x="294" y="396.20" text-anchor="end" font-size="4.8" fill="#555">300</text>
<line x1="295.8" y1="394.50" x2="299.3" y2="394.50" stroke="#c4c4c4" stroke-width="0.7"/>
<line x1="297.1" y1="391.25" x2="298.3" y2="391.25" stroke="#ccc" stroke-width="0.4"/>
<line x1="297.1" y1="388.00" x2="298.3" y2="388.00" stroke="#ccc" stroke-width="0.4"/>
<line x1="297.1" y1="384.75" x2="298.3" y2="384.75" stroke="#ccc" stroke-width="0.4"/>
<text x="294" y="383.20" text-anchor="end" font-size="4.8" fill="#555">400</text>
<line x1="295.8" y1="381.50" x2="299.3" y2="381.50" stroke="#c4c4c4" stroke-width="0.7"/>
<line x1="297.1" y1="378.25" x2="298.3" y2="378.25" stroke="#ccc" stroke-width="0.4"/>
<line x1="297.1" y1="375.00" x2="298.3" y2="375.00" stroke="#ccc" stroke-width="0.4"/>
<line x1="297.1" y1="371.75" x2="298.3" y2="371.75" stroke="#ccc" stroke-width="0.4"/>
<text x="294" y="370.20" text-anchor="end" font-size="4.8" fill="#555">500</text>
<line x1="295.8" y1="368.50" x2="299.3" y2="368.50" stroke="#c4c4c4" stroke-width="0.7"/>
<line x1="297.1" y1="365.25" x2="298.3" y2="365.25" stroke="#ccc" stroke-width="0.4"/>
<line x1="297.1" y1="362.00" x2="298.3" y2="362.00" stroke="#ccc" stroke-width="0.4"/>
<line x1="297.1" y1="358.75" x2="298.3" y2="358.75" stroke="#ccc" stroke-width="0.4"/>
<text x="294" y="357.20" text-anchor="end" font-size="4.8" fill="#555">600</text>
<line x1="295.8" y1="355.50" x2="299.3" y2="355.50" stroke="#c4c4c4" stroke-width="0.7"/>
<line x1="297.1" y1="352.25" x2="298.3" y2="352.25" stroke="#ccc" stroke-width="0.4"/>
<line x1="297.1" y1="349.00" x2="298.3" y2="349.00" stroke="#ccc" stroke-width="0.4"/>
<line x1="297.1" y1="345.75" x2="298.3" y2="345.75" stroke="#ccc" stroke-width="0.4"/>
<text x="294" y="344.20" text-anchor="end" font-size="4.8" fill="#555">700</text>
<line x1="295.8" y1="342.50" x2="299.3" y2="342.50" stroke="#c4c4c4" stroke-width="0.7"/>
<line x1="297.1" y1="339.25" x2="298.3" y2="339.25" stroke="#ccc" stroke-width="0.4"/>
<line x1="297.1" y1="336.00" x2="298.3" y2="336.00" stroke="#ccc" stroke-width="0.4"/>
<line x1="297.1" y1="332.75" x2="298.3" y2="332.75" stroke="#ccc" stroke-width="0.4"/>
<text x="294" y="331.20" text-anchor="end" font-size="4.8" fill="#555">800</text>
<line x1="295.8" y1="329.50" x2="299.3" y2="329.50" stroke="#c4c4c4" stroke-width="0.7"/>
<line x1="297.1" y1="326.25" x2="298.3" y2="326.25" stroke="#ccc" stroke-width="0.4"/>
<line x1="297.1" y1="323.00" x2="298.3" y2="323.00" stroke="#ccc" stroke-width="0.4"/>
<line x1="297.1" y1="319.75" x2="298.3" y2="319.75" stroke="#ccc" stroke-width="0.4"/>
<text x="294" y="318.20" text-anchor="end" font-size="4.8" fill="#555">900</text>
<line x1="295.8" y1="316.50" x2="299.3" y2="316.50" stroke="#c4c4c4" stroke-width="0.7"/>
<line x1="297.1" y1="313.25" x2="298.3" y2="313.25" stroke="#ccc" stroke-width="0.4"/>
<line x1="297.1" y1="310.00" x2="298.3" y2="310.00" stroke="#ccc" stroke-width="0.4"/>
<line x1="297.1" y1="306.75" x2="298.3" y2="306.75" stroke="#ccc" stroke-width="0.4"/>
<text x="294" y="305.20" text-anchor="end" font-size="4.8" fill="#555">1000</text>
<line x1="295.8" y1="303.50" x2="299.3" y2="303.50" stroke="#c4c4c4" stroke-width="0.7"/>
<line x1="298.3" y1="292.7" x2="298.3" y2="433.5" stroke="#d4d4d4" stroke-width="1"/>
<line x1="298.3" y1="433.5" x2="792.3" y2="433.5" stroke="#c8c8c8" stroke-width="1"/>
<rect x="303.25" y="422.58" width="6.3" height="10.92" fill="#4682b4"/>
<line x1="306.40" y1="418.98" x2="306.40" y2="422.58" stroke="#9fbbd6" stroke-width="0.7"/>
<rect x="302.40" y="412.18" width="8" height="6.8" fill="#f3f7fb" stroke="#9fbbd6" stroke-width="0.7"/>
<text x="306.40" y="417.28" text-anchor="middle" font-size="4.6" fill="#48709a">84</text>
<line x1="306.40" y1="433.5" x2="306.40" y2="435.0" stroke="#ccc" stroke-width="0.5"/>
<rect x="313.41" y="401.00" width="6.3" height="32.50" fill="#4682b4"/>
<line x1="316.56" y1="397.40" x2="316.56" y2="401.00" stroke="#9fbbd6" stroke-width="0.7"/>
<rect x="311.56" y="390.60" width="10" height="6.8" fill="#f3f7fb" stroke="#9fbbd6" stroke-width="0.7"/>
<text x="316.56" y="395.70" text-anchor="middle" font-size="4.6" fill="#48709a">250</text>
<line x1="316.56" y1="433.5" x2="316.56" y2="435.0" stroke="#ccc" stroke-width="0.5"/>
<line x1="316.56" y1="433.5" x2="316.56" y2="436.0" stroke="#aaa" stroke-width="0.6"/>
<text x="316.56" y="442.30" text-anchor="middle" font-size="4.8" fill="#555">12时</text>
<rect x="323.58" y="357.84" width="6.3" height="75.66" fill="#4682b4"/>
<line x1="326.73" y1="354.24" x2="326.73" y2="357.84" stroke="#9fbbd6" stroke-width="0.7"/>
<rect x="321.73" y="347.44" width="10" height="6.8" fill="#f3f7fb" stroke="#9fbbd6" stroke-width="0.7"/>
<text x="326.73" y="352.54" text-anchor="middle" font-size="4.6" fill="#48709a">582</text>
<line x1="326.73" y1="433.5" x2="326.73" y2="435.0" stroke="#ccc" stroke-width="0.5"/>
<rect x="333.74" y="318.32" width="6.3" height="115.18" fill="#4682b4"/>
<line x1="336.89" y1="314.72" x2="336.89" y2="318.32" stroke="#9fbbd6" stroke-width="0.7"/>
<rect x="331.89" y="307.92" width="10" height="6.8" fill="#f3f7fb" stroke="#9fbbd6" stroke-width="0.7"/>
<text x="336.89" y="313.02" text-anchor="middle" font-size="4.6" fill="#48709a">886</text>
<line x1="336.89" y1="433.5" x2="336.89" y2="435.0" stroke="#ccc" stroke-width="0.5"/>
<line x1="336.89" y1="433.5" x2="336.89" y2="436.0" stroke="#aaa" stroke-width="0.6"/>
<text x="336.89" y="442.30" text-anchor="middle" font-size="4.8" fill="#555">14时</text>
<rect x="343.91" y="311.82" width="6.3" height="121.68" fill="#4682b4"/>
<line x1="347.06" y1="308.22" x2="347.06" y2="311.82" stroke="#9fbbd6" stroke-width="0.7"/>
<rect x="342.06" y="301.42" width="10" height="6.8" fill="#f3f7fb" stroke="#9fbbd6" stroke-width="0.7"/>
<text x="347.06" y="306.52" text-anchor="middle" font-size="4.6" fill="#48709a">936</text>
<line x1="347.06" y1="433.5" x2="347.06" y2="435.0" stroke="#ccc" stroke-width="0.5"/>
<rect x="354.07" y="305.06" width="6.3" height="128.44" fill="#4682b4"/>
<line x1="357.22" y1="301.46" x2="357.22" y2="305.06" stroke="#9fbbd6" stroke-width="0.7"/>
<rect x="352.22" y="294.66" width="10" height="6.8" fill="#f3f7fb" stroke="#9fbbd6" stroke-width="0.7"/>
<text x="357.22" y="299.76" text-anchor="middle" font-size="4.6" fill="#48709a">988</text>
<line x1="357.22" y1="433.5" x2="357.22" y2="435.0" stroke="#ccc" stroke-width="0.5"/>
<line x1="357.22" y1="433.5" x2="357.22" y2="436.0" stroke="#aaa" stroke-width="0.6"/>
<text x="357.22" y="442.30" text-anchor="middle" font-size="4.8" fill="#555">16时</text>
<rect x="364.23" y="320.66" width="6.3" height="112.84" fill="#4682b4"/>
<line x1="367.38" y1="317.06" x2="367.38" y2="320.66" stroke="#9fbbd6" stroke-width="0.7"/>
<rect x="362.38" y="310.26" width="10" height="6.8" fill="#f3f7fb" stroke="#9fbbd6" stroke-width="0.7"/>
<text x="367.38" y="315.36" text-anchor="middle" font-size="4.6" fill="#48709a">868</text>
<line x1="367.38" y1="433.5" x2="367.38" y2="435.0" stroke="#ccc" stroke-width="0.5"/>
<rect x="374.40" y="307.14" width="6.3" height="126.36" fill="#4682b4"/>
<line x1="377.55" y1="303.54" x2="377.55" y2="307.14" stroke="#9fbbd6" stroke-width="0.7"/>
<rect x="372.55" y="296.74" width="10" height="6.8" fill="#f3f7fb" stroke="#9fbbd6" stroke-width="0.7"/>
<text x="377.55" y="301.84" text-anchor="middle" font-size="4.6" fill="#48709a">972</text>
<line x1="377.55" y1="433.5" x2="377.55" y2="435.0" stroke="#ccc" stroke-width="0.5"/>
<line x1="377.55" y1="433.5" x2="377.55" y2="436.0" stroke="#aaa" stroke-width="0.6"/>
<text x="377.55" y="442.30" text-anchor="middle" font-size="4.8" fill="#555">18时</text>
<rect x="384.56" y="308.70" width="6.3" height="124.80" fill="#4682b4"/>
<line x1="387.71" y1="305.10" x2="387.71" y2="308.70" stroke="#9fbbd6" stroke-width="0.7"/>
<rect x="382.71" y="298.30" width="10" height="6.8" fill="#f3f7fb" stroke="#9fbbd6" stroke-width="0.7"/>
<text x="387.71" y="303.40" text-anchor="middle" font-size="4.6" fill="#48709a">960</text>
<line x1="387.71" y1="433.5" x2="387.71" y2="435.0" stroke="#ccc" stroke-width="0.5"/>
<rect x="394.73" y="355.50" width="6.3" height="78.00" fill="#4682b4"/>
<line x1="397.88" y1="351.90" x2="397.88" y2="355.50" stroke="#9fbbd6" stroke-width="0.7"/>
<rect x="392.88" y="345.10" width="10" height="6.8" fill="#f3f7fb" stroke="#9fbbd6" stroke-width="0.7"/>
<text x="397.88" y="350.20" text-anchor="middle" font-size="4.6" fill="#48709a">600</text>
<line x1="397.88" y1="433.5" x2="397.88" y2="435.0" stroke="#ccc" stroke-width="0.5"/>
<line x1="397.88" y1="433.5" x2="397.88" y2="436.0" stroke="#aaa" stroke-width="0.6"/>
<text x="397.88" y="442.30" text-anchor="middle" font-size="4.8" fill="#555">20时</text>
<rect x="404.89" y="396.06" width="6.3" height="37.44" fill="#4682b4"/>
<line x1="408.04" y1="392.46" x2="408.04" y2="396.06" stroke="#9fbbd6" stroke-width="0.7"/>
<rect x="403.04" y="385.66" width="10" height="6.8" fill="#f3f7fb" stroke="#9fbbd6" stroke-width="0.7"/>
<text x="408.04" y="390.76" text-anchor="middle" font-size="4.6" fill="#48709a">288</text>
<line x1="408.04" y1="433.5" x2="408.04" y2="435.0" stroke="#ccc" stroke-width="0.5"/>
<rect x="415.05" y="420.24" width="6.3" height="13.26" fill="#4682b4"/>
<line x1="418.20" y1="416.64" x2="418.20" y2="420.24" stroke="#9fbbd6" stroke-width="0.7"/>
<rect x="413.20" y="409.84" width="10" height="6.8" fill="#f3f7fb" stroke="#9fbbd6" stroke-width="0.7"/>
<text x="418.20" y="414.94" text-anchor="middle" font-size="4.6" fill="#48709a">102</text>
<line x1="418.20" y1="433.5" x2="418.20" y2="435.0" stroke="#ccc" stroke-width="0.5"/>
<line x1="418.20" y1="433.5" x2="418.20" y2="436.0" stroke="#aaa" stroke-width="0.6"/>
<text x="418.20" y="442.30" text-anchor="middle" font-size="4.8" fill="#555">22时</text>
<rect x="425.22" y="421.80" width="6.3" height="11.70" fill="#4682b4"/>
<line x1="428.37" y1="418.20" x2="428.37" y2="421.80" stroke="#9fbbd6" stroke-width="0.7"/>
<rect x="424.37" y="411.40" width="8" height="6.8" fill="#f3f7fb" stroke="#9fbbd6" stroke-width="0.7"/>
<text x="428.37" y="416.50" text-anchor="middle" font-size="4.6" fill="#48709a">90</text>
<line x1="428.37" y1="433.5" x2="428.37" y2="435.0" stroke="#ccc" stroke-width="0.5"/>
<rect x="435.38" y="422.58" width="6.3" height="10.92" fill="#4682b4"/>
<line x1="438.53" y1="418.98" x2="438.53" y2="422.58" stroke="#9fbbd6" stroke-width="0.7"/>
<rect x="434.53" y="412.18" width="8" height="6.8" fill="#f3f7fb" stroke="#9fbbd6" stroke-width="0.7"/>
<text x="438.53" y="417.28" text-anchor="middle" font-size="4.6" fill="#48709a">84</text>
<line x1="438.53" y1="433.5" x2="438.53" y2="435.0" stroke="#ccc" stroke-width="0.5"/>
<line x1="438.53" y1="433.5" x2="438.53" y2="436.0" stroke="#aaa" stroke-width="0.6"/>
<text x="438.53" y="442.30" text-anchor="middle" font-size="4.8" fill="#555">00时</text>
<rect x="445.55" y="424.14" width="6.3" height="9.36" fill="#4682b4"/>
<line x1="448.70" y1="420.54" x2="448.70" y2="424.14" stroke="#9fbbd6" stroke-width="0.7"/>
<rect x="444.70" y="413.74" width="8" height="6.8" fill="#f3f7fb" stroke="#9fbbd6" stroke-width="0.7"/>
<text x="448.70" y="418.84" text-anchor="middle" font-size="4.6" fill="#48709a">72</text>
<line x1="448.70" y1="433.5" x2="448.70" y2="435.0" stroke="#ccc" stroke-width="0.5"/>
<rect x="455.71" y="424.14" width="6.3" height="9.36" fill="#4682b4"/>
<line x1="458.86" y1="420.54" x2="458.86" y2="424.14" stroke="#9fbbd6" stroke-width="0.7"/>
<rect x="454.86" y="413.74" width="8" height="6.8" fill="#f3f7fb" stroke="#9fbbd6" stroke-width="0.7"/>
<text x="458.86" y="418.84" text-anchor="middle" font-size="4.6" fill="#48709a">72</text>
<line x1="458.86" y1="433.5" x2="458.86" y2="435.0" stroke="#ccc" stroke-width="0.5"/>
<line x1="458.86" y1="433.5" x2="458.86" y2="436.0" stroke="#aaa" stroke-width="0.6"/>
<text x="458.86" y="442.30" text-anchor="middle" font-size="4.8" fill="#555">02时</text>
<rect x="465.87" y="424.92" width="6.3" height="8.58" fill="#4682b4"/>
<line x1="469.02" y1="421.32" x2="469.02" y2="424.92" stroke="#9fbbd6" stroke-width="0.7"/>
<rect x="465.02" y="414.52" width="8" height="6.8" fill="#f3f7fb" stroke="#9fbbd6" stroke-width="0.7"/>
<text x="469.02" y="419.62" text-anchor="middle" font-size="4.6" fill="#48709a">66</text>
<line x1="469.02" y1="433.5" x2="469.02" y2="435.0" stroke="#ccc" stroke-width="0.5"/>
<rect x="476.04" y="424.92" width="6.3" height="8.58" fill="#4682b4"/>
<line x1="479.19" y1="421.32" x2="479.19" y2="424.92" stroke="#9fbbd6" stroke-width="0.7"/>
<rect x="475.19" y="414.52" width="8" height="6.8" fill="#f3f7fb" stroke="#9fbbd6" stroke-width="0.7"/>
<text x="479.19" y="419.62" text-anchor="middle" font-size="4.6" fill="#48709a">66</text>
<line x1="479.19" y1="433.5" x2="479.19" y2="435.0" stroke="#ccc" stroke-width="0.5"/>
<line x1="479.19" y1="433.5" x2="479.19" y2="436.0" stroke="#aaa" stroke-width="0.6"/>
<text x="479.19" y="442.30" text-anchor="middle" font-size="4.8" fill="#555">04时</text>
<rect x="486.20" y="424.92" width="6.3" height="8.58" fill="#4682b4"/>
<line x1="489.35" y1="421.32" x2="489.35" y2="424.92" stroke="#9fbbd6" stroke-width="0.7"/>
<rect x="485.35" y="414.52" width="8" height="6.8" fill="#f3f7fb" stroke="#9fbbd6" stroke-width="0.7"/>
<text x="489.35" y="419.62" text-anchor="middle" font-size="4.6" fill="#48709a">66</text>
<line x1="489.35" y1="433.5" x2="489.35" y2="435.0" stroke="#ccc" stroke-width="0.5"/>
<rect x="496.37" y="424.40" width="6.3" height="9.10" fill="#4682b4"/>
<line x1="499.52" y1="420.80" x2="499.52" y2="424.40" stroke="#9fbbd6" stroke-width="0.7"/>
<rect x="495.52" y="414.00" width="8" height="6.8" fill="#f3f7fb" stroke="#9fbbd6" stroke-width="0.7"/>
<text x="499.52" y="419.10" text-anchor="middle" font-size="4.6" fill="#48709a">70</text>
<line x1="499.52" y1="433.5" x2="499.52" y2="435.0" stroke="#ccc" stroke-width="0.5"/>
<line x1="499.52" y1="433.5" x2="499.52" y2="436.0" stroke="#aaa" stroke-width="0.6"/>
<text x="499.52" y="442.30" text-anchor="middle" font-size="4.8" fill="#555">06时</text>
<rect x="506.53" y="425.18" width="6.3" height="8.32" fill="#4682b4"/>
<line x1="509.68" y1="421.58" x2="509.68" y2="425.18" stroke="#9fbbd6" stroke-width="0.7"/>
<rect x="505.68" y="414.78" width="8" height="6.8" fill="#f3f7fb" stroke="#9fbbd6" stroke-width="0.7"/>
<text x="509.68" y="419.88" text-anchor="middle" font-size="4.6" fill="#48709a">64</text>
<line x1="509.68" y1="433.5" x2="509.68" y2="435.0" stroke="#ccc" stroke-width="0.5"/>
<rect x="516.69" y="405.16" width="6.3" height="28.34" fill="#4682b4"/>
<line x1="519.84" y1="401.56" x2="519.84" y2="405.16" stroke="#9fbbd6" stroke-width="0.7"/>
<rect x="514.84" y="394.76" width="10" height="6.8" fill="#f3f7fb" stroke="#9fbbd6" stroke-width="0.7"/>
<text x="519.84" y="399.86" text-anchor="middle" font-size="4.6" fill="#48709a">218</text>
<line x1="519.84" y1="433.5" x2="519.84" y2="435.0" stroke="#ccc" stroke-width="0.5"/>
<line x1="519.84" y1="433.5" x2="519.84" y2="436.0" stroke="#aaa" stroke-width="0.6"/>
<text x="519.84" y="442.30" text-anchor="middle" font-size="4.8" fill="#555">08时</text>
<rect x="526.86" y="399.96" width="6.3" height="33.54" fill="#4682b4"/>
<line x1="530.01" y1="396.36" x2="530.01" y2="399.96" stroke="#9fbbd6" stroke-width="0.7"/>
<rect x="525.01" y="389.56" width="10" height="6.8" fill="#f3f7fb" stroke="#9fbbd6" stroke-width="0.7"/>
<text x="530.01" y="394.66" text-anchor="middle" font-size="4.6" fill="#48709a">258</text>
<line x1="530.01" y1="433.5" x2="530.01" y2="435.0" stroke="#ccc" stroke-width="0.5"/>
<rect x="537.02" y="398.14" width="6.3" height="35.36" fill="#4682b4"/>
<line x1="540.17" y1="394.54" x2="540.17" y2="398.14" stroke="#9fbbd6" stroke-width="0.7"/>
<rect x="535.17" y="387.74" width="10" height="6.8" fill="#f3f7fb" stroke="#9fbbd6" stroke-width="0.7"/>
<text x="540.17" y="392.84" text-anchor="middle" font-size="4.6" fill="#48709a">272</text>
<line x1="540.17" y1="433.5" x2="540.17" y2="435.0" stroke="#ccc" stroke-width="0.5"/>
<line x1="540.17" y1="433.5" x2="540.17" y2="436.0" stroke="#aaa" stroke-width="0.6"/>
<text x="540.17" y="442.30" text-anchor="middle" font-size="4.8" fill="#555">10时</text>
<rect x="547.19" y="395.54" width="6.3" height="37.96" fill="#4682b4"/>
<line x1="550.34" y1="391.94" x2="550.34" y2="395.54" stroke="#9fbbd6" stroke-width="0.7"/>
<rect x="545.34" y="385.14" width="10" height="6.8" fill="#f3f7fb" stroke="#9fbbd6" stroke-width="0.7"/>
<text x="550.34" y="390.24" text-anchor="middle" font-size="4.6" fill="#48709a">292</text>
<line x1="550.34" y1="433.5" x2="550.34" y2="435.0" stroke="#ccc" stroke-width="0.5"/>
<rect x="557.35" y="382.54" width="6.3" height="50.96" fill="#4682b4"/>
<line x1="560.50" y1="378.94" x2="560.50" y2="382.54" stroke="#9fbbd6" stroke-width="0.7"/>
<rect x="555.50" y="372.14" width="10" height="6.8" fill="#f3f7fb" stroke="#9fbbd6" stroke-width="0.7"/>
<text x="560.50" y="377.24" text-anchor="middle" font-size="4.6" fill="#48709a">392</text>
<line x1="560.50" y1="433.5" x2="560.50" y2="435.0" stroke="#ccc" stroke-width="0.5"/>
<line x1="560.50" y1="433.5" x2="560.50" y2="436.0" stroke="#aaa" stroke-width="0.6"/>
<text x="560.50" y="442.30" text-anchor="middle" font-size="4.8" fill="#555">12时</text>
<rect x="567.51" y="376.04" width="6.3" height="57.46" fill="#4682b4"/>
<line x1="570.66" y1="372.44" x2="570.66" y2="376.04" stroke="#9fbbd6" stroke-width="0.7"/>
<rect x="565.66" y="365.64" width="10" height="6.8" fill="#f3f7fb" stroke="#9fbbd6" stroke-width="0.7"/>
<text x="570.66" y="370.74" text-anchor="middle" font-size="4.6" fill="#48709a">442</text>
<line x1="570.66" y1="433.5" x2="570.66" y2="435.0" stroke="#ccc" stroke-width="0.5"/>
<rect x="577.68" y="353.42" width="6.3" height="80.08" fill="#4682b4"/>
<line x1="580.83" y1="349.82" x2="580.83" y2="353.42" stroke="#9fbbd6" stroke-width="0.7"/>
<rect x="575.83" y="343.02" width="10" height="6.8" fill="#f3f7fb" stroke="#9fbbd6" stroke-width="0.7"/>
<text x="580.83" y="348.12" text-anchor="middle" font-size="4.6" fill="#48709a">616</text>
<line x1="580.83" y1="433.5" x2="580.83" y2="435.0" stroke="#ccc" stroke-width="0.5"/>
<line x1="580.83" y1="433.5" x2="580.83" y2="436.0" stroke="#aaa" stroke-width="0.6"/>
<text x="580.83" y="442.30" text-anchor="middle" font-size="4.8" fill="#555">14时</text>
<rect x="587.84" y="332.88" width="6.3" height="100.62" fill="#4682b4"/>
<line x1="590.99" y1="329.28" x2="590.99" y2="332.88" stroke="#9fbbd6" stroke-width="0.7"/>
<rect x="585.99" y="322.48" width="10" height="6.8" fill="#f3f7fb" stroke="#9fbbd6" stroke-width="0.7"/>
<text x="590.99" y="327.58" text-anchor="middle" font-size="4.6" fill="#48709a">774</text>
<line x1="590.99" y1="433.5" x2="590.99" y2="435.0" stroke="#ccc" stroke-width="0.5"/>
<rect x="598.01" y="331.32" width="6.3" height="102.18" fill="#4682b4"/>
<line x1="601.16" y1="327.72" x2="601.16" y2="331.32" stroke="#9fbbd6" stroke-width="0.7"/>
<rect x="596.16" y="320.92" width="10" height="6.8" fill="#f3f7fb" stroke="#9fbbd6" stroke-width="0.7"/>
<text x="601.16" y="326.02" text-anchor="middle" font-size="4.6" fill="#48709a">786</text>
<line x1="601.16" y1="433.5" x2="601.16" y2="435.0" stroke="#ccc" stroke-width="0.5"/>
<line x1="601.16" y1="433.5" x2="601.16" y2="436.0" stroke="#aaa" stroke-width="0.6"/>
<text x="601.16" y="442.30" text-anchor="middle" font-size="4.8" fill="#555">16时</text>
<rect x="608.17" y="344.32" width="6.3" height="89.18" fill="#4682b4"/>
<line x1="611.32" y1="340.72" x2="611.32" y2="344.32" stroke="#9fbbd6" stroke-width="0.7"/>
<rect x="606.32" y="333.92" width="10" height="6.8" fill="#f3f7fb" stroke="#9fbbd6" stroke-width="0.7"/>
<text x="611.32" y="339.02" text-anchor="middle" font-size="4.6" fill="#48709a">686</text>
<line x1="611.32" y1="433.5" x2="611.32" y2="435.0" stroke="#ccc" stroke-width="0.5"/>
<rect x="618.33" y="344.06" width="6.3" height="89.44" fill="#4682b4"/>
<line x1="621.48" y1="340.46" x2="621.48" y2="344.06" stroke="#9fbbd6" stroke-width="0.7"/>
<rect x="616.48" y="333.66" width="10" height="6.8" fill="#f3f7fb" stroke="#9fbbd6" stroke-width="0.7"/>
<text x="621.48" y="338.76" text-anchor="middle" font-size="4.6" fill="#48709a">688</text>
<line x1="621.48" y1="433.5" x2="621.48" y2="435.0" stroke="#ccc" stroke-width="0.5"/>
<line x1="621.48" y1="433.5" x2="621.48" y2="436.0" stroke="#aaa" stroke-width="0.6"/>
<text x="621.48" y="442.30" text-anchor="middle" font-size="4.8" fill="#555">18时</text>
<rect x="628.50" y="337.04" width="6.3" height="96.46" fill="#4682b4"/>
<line x1="631.65" y1="333.44" x2="631.65" y2="337.04" stroke="#9fbbd6" stroke-width="0.7"/>
<rect x="626.65" y="326.64" width="10" height="6.8" fill="#f3f7fb" stroke="#9fbbd6" stroke-width="0.7"/>
<text x="631.65" y="331.74" text-anchor="middle" font-size="4.6" fill="#48709a">742</text>
<line x1="631.65" y1="433.5" x2="631.65" y2="435.0" stroke="#ccc" stroke-width="0.5"/>
<rect x="638.66" y="358.10" width="6.3" height="75.40" fill="#4682b4"/>
<line x1="641.81" y1="354.50" x2="641.81" y2="358.10" stroke="#9fbbd6" stroke-width="0.7"/>
<rect x="636.81" y="347.70" width="10" height="6.8" fill="#f3f7fb" stroke="#9fbbd6" stroke-width="0.7"/>
<text x="641.81" y="352.80" text-anchor="middle" font-size="4.6" fill="#48709a">580</text>
<line x1="641.81" y1="433.5" x2="641.81" y2="435.0" stroke="#ccc" stroke-width="0.5"/>
<line x1="641.81" y1="433.5" x2="641.81" y2="436.0" stroke="#aaa" stroke-width="0.6"/>
<text x="641.81" y="442.30" text-anchor="middle" font-size="4.8" fill="#555">20时</text>
<rect x="648.83" y="386.70" width="6.3" height="46.80" fill="#4682b4"/>
<line x1="651.98" y1="383.10" x2="651.98" y2="386.70" stroke="#9fbbd6" stroke-width="0.7"/>
<rect x="646.98" y="376.30" width="10" height="6.8" fill="#f3f7fb" stroke="#9fbbd6" stroke-width="0.7"/>
<text x="651.98" y="381.40" text-anchor="middle" font-size="4.6" fill="#48709a">360</text>
<line x1="651.98" y1="433.5" x2="651.98" y2="435.0" stroke="#ccc" stroke-width="0.5"/>
<rect x="658.99" y="373.18" width="6.3" height="60.32" fill="#4682b4"/>
<line x1="662.14" y1="369.58" x2="662.14" y2="373.18" stroke="#9fbbd6" stroke-width="0.7"/>
<rect x="657.14" y="362.78" width="10" height="6.8" fill="#f3f7fb" stroke="#9fbbd6" stroke-width="0.7"/>
<text x="662.14" y="367.88" text-anchor="middle" font-size="4.6" fill="#48709a">464</text>
<line x1="662.14" y1="433.5" x2="662.14" y2="435.0" stroke="#ccc" stroke-width="0.5"/>
<line x1="662.14" y1="433.5" x2="662.14" y2="436.0" stroke="#aaa" stroke-width="0.6"/>
<text x="662.14" y="442.30" text-anchor="middle" font-size="4.8" fill="#555">22时</text>
<rect x="669.15" y="362.78" width="6.3" height="70.72" fill="#4682b4"/>
<line x1="672.30" y1="359.18" x2="672.30" y2="362.78" stroke="#9fbbd6" stroke-width="0.7"/>
<rect x="667.30" y="352.38" width="10" height="6.8" fill="#f3f7fb" stroke="#9fbbd6" stroke-width="0.7"/>
<text x="672.30" y="357.48" text-anchor="middle" font-size="4.6" fill="#48709a">544</text>
<line x1="672.30" y1="433.5" x2="672.30" y2="435.0" stroke="#ccc" stroke-width="0.5"/>
<rect x="679.32" y="371.88" width="6.3" height="61.62" fill="#4682b4"/>
<line x1="682.47" y1="368.28" x2="682.47" y2="371.88" stroke="#9fbbd6" stroke-width="0.7"/>
<rect x="677.47" y="361.48" width="10" height="6.8" fill="#f3f7fb" stroke="#9fbbd6" stroke-width="0.7"/>
<text x="682.47" y="366.58" text-anchor="middle" font-size="4.6" fill="#48709a">474</text>
<line x1="682.47" y1="433.5" x2="682.47" y2="435.0" stroke="#ccc" stroke-width="0.5"/>
<line x1="682.47" y1="433.5" x2="682.47" y2="436.0" stroke="#aaa" stroke-width="0.6"/>
<text x="682.47" y="442.30" text-anchor="middle" font-size="4.8" fill="#555">00时</text>
<rect x="689.48" y="361.74" width="6.3" height="71.76" fill="#4682b4"/>
<line x1="692.63" y1="358.14" x2="692.63" y2="361.74" stroke="#9fbbd6" stroke-width="0.7"/>
<rect x="687.63" y="351.34" width="10" height="6.8" fill="#f3f7fb" stroke="#9fbbd6" stroke-width="0.7"/>
<text x="692.63" y="356.44" text-anchor="middle" font-size="4.6" fill="#48709a">552</text>
<line x1="692.63" y1="433.5" x2="692.63" y2="435.0" stroke="#ccc" stroke-width="0.5"/>
<rect x="699.65" y="352.12" width="6.3" height="81.38" fill="#4682b4"/>
<line x1="702.80" y1="348.52" x2="702.80" y2="352.12" stroke="#9fbbd6" stroke-width="0.7"/>
<rect x="697.80" y="341.72" width="10" height="6.8" fill="#f3f7fb" stroke="#9fbbd6" stroke-width="0.7"/>
<text x="702.80" y="346.82" text-anchor="middle" font-size="4.6" fill="#48709a">626</text>
<line x1="702.80" y1="433.5" x2="702.80" y2="435.0" stroke="#ccc" stroke-width="0.5"/>
<line x1="702.80" y1="433.5" x2="702.80" y2="436.0" stroke="#aaa" stroke-width="0.6"/>
<text x="702.80" y="442.30" text-anchor="middle" font-size="4.8" fill="#555">02时</text>
<rect x="709.81" y="351.86" width="6.3" height="81.64" fill="#4682b4"/>
<line x1="712.96" y1="348.26" x2="712.96" y2="351.86" stroke="#9fbbd6" stroke-width="0.7"/>
<rect x="707.96" y="341.46" width="10" height="6.8" fill="#f3f7fb" stroke="#9fbbd6" stroke-width="0.7"/>
<text x="712.96" y="346.56" text-anchor="middle" font-size="4.6" fill="#48709a">628</text>
<line x1="712.96" y1="433.5" x2="712.96" y2="435.0" stroke="#ccc" stroke-width="0.5"/>
<rect x="719.97" y="358.36" width="6.3" height="75.14" fill="#4682b4"/>
<line x1="723.12" y1="354.76" x2="723.12" y2="358.36" stroke="#9fbbd6" stroke-width="0.7"/>
<rect x="718.12" y="347.96" width="10" height="6.8" fill="#f3f7fb" stroke="#9fbbd6" stroke-width="0.7"/>
<text x="723.12" y="353.06" text-anchor="middle" font-size="4.6" fill="#48709a">578</text>
<line x1="723.12" y1="433.5" x2="723.12" y2="435.0" stroke="#ccc" stroke-width="0.5"/>
<line x1="723.12" y1="433.5" x2="723.12" y2="436.0" stroke="#aaa" stroke-width="0.6"/>
<text x="723.12" y="442.30" text-anchor="middle" font-size="4.8" fill="#555">04时</text>
<rect x="730.14" y="356.28" width="6.3" height="77.22" fill="#4682b4"/>
<line x1="733.29" y1="352.68" x2="733.29" y2="356.28" stroke="#9fbbd6" stroke-width="0.7"/>
<rect x="728.29" y="345.88" width="10" height="6.8" fill="#f3f7fb" stroke="#9fbbd6" stroke-width="0.7"/>
<text x="733.29" y="350.98" text-anchor="middle" font-size="4.6" fill="#48709a">594</text>
<line x1="733.29" y1="433.5" x2="733.29" y2="435.0" stroke="#ccc" stroke-width="0.5"/>
<rect x="740.30" y="351.08" width="6.3" height="82.42" fill="#4682b4"/>
<line x1="743.45" y1="347.48" x2="743.45" y2="351.08" stroke="#9fbbd6" stroke-width="0.7"/>
<rect x="738.45" y="340.68" width="10" height="6.8" fill="#f3f7fb" stroke="#9fbbd6" stroke-width="0.7"/>
<text x="743.45" y="345.78" text-anchor="middle" font-size="4.6" fill="#48709a">634</text>
<line x1="743.45" y1="433.5" x2="743.45" y2="435.0" stroke="#ccc" stroke-width="0.5"/>
<line x1="743.45" y1="433.5" x2="743.45" y2="436.0" stroke="#aaa" stroke-width="0.6"/>
<text x="743.45" y="442.30" text-anchor="middle" font-size="4.8" fill="#555">06时</text>
<rect x="750.47" y="362.78" width="6.3" height="70.72" fill="#4682b4"/>
<line x1="753.62" y1="359.18" x2="753.62" y2="362.78" stroke="#9fbbd6" stroke-width="0.7"/>
<rect x="748.62" y="352.38" width="10" height="6.8" fill="#f3f7fb" stroke="#9fbbd6" stroke-width="0.7"/>
<text x="753.62" y="357.48" text-anchor="middle" font-size="4.6" fill="#48709a">544</text>
<line x1="753.62" y1="433.5" x2="753.62" y2="435.0" stroke="#ccc" stroke-width="0.5"/>
<rect x="760.63" y="379.94" width="6.3" height="53.56" fill="#4682b4"/>
<line x1="763.78" y1="376.34" x2="763.78" y2="379.94" stroke="#9fbbd6" stroke-width="0.7"/>
<rect x="758.78" y="369.54" width="10" height="6.8" fill="#f3f7fb" stroke="#9fbbd6" stroke-width="0.7"/>
<text x="763.78" y="374.64" text-anchor="middle" font-size="4.6" fill="#48709a">412</text>
<line x1="763.78" y1="433.5" x2="763.78" y2="435.0" stroke="#ccc" stroke-width="0.5"/>
<line x1="763.78" y1="433.5" x2="763.78" y2="436.0" stroke="#aaa" stroke-width="0.6"/>
<text x="763.78" y="442.30" text-anchor="middle" font-size="4.8" fill="#555">08时</text>
<rect x="770.79" y="387.22" width="6.3" height="46.28" fill="#4682b4"/>
<line x1="773.94" y1="383.62" x2="773.94" y2="387.22" stroke="#9fbbd6" stroke-width="0.7"/>
<rect x="768.94" y="376.82" width="10" height="6.8" fill="#f3f7fb" stroke="#9fbbd6" stroke-width="0.7"/>
<text x="773.94" y="381.92" text-anchor="middle" font-size="4.6" fill="#48709a">356</text>
<line x1="773.94" y1="433.5" x2="773.94" y2="435.0" stroke="#ccc" stroke-width="0.5"/>
<rect x="780.96" y="421.80" width="6.3" height="11.70" fill="#4682b4"/>
<line x1="784.11" y1="418.20" x2="784.11" y2="421.80" stroke="#9fbbd6" stroke-width="0.7"/>
<rect x="780.11" y="411.40" width="8" height="6.8" fill="#f3f7fb" stroke="#9fbbd6" stroke-width="0.7"/>
<text x="784.11" y="416.50" text-anchor="middle" font-size="4.6" fill="#48709a">90</text>
<line x1="784.11" y1="433.5" x2="784.11" y2="435.0" stroke="#ccc" stroke-width="0.5"/>
<line x1="784.11" y1="433.5" x2="784.11" y2="436.0" stroke="#aaa" stroke-width="0.6"/>
<text x="784.11" y="442.30" text-anchor="middle" font-size="4.8" fill="#555">10时</text>
</svg>
</body></html>
